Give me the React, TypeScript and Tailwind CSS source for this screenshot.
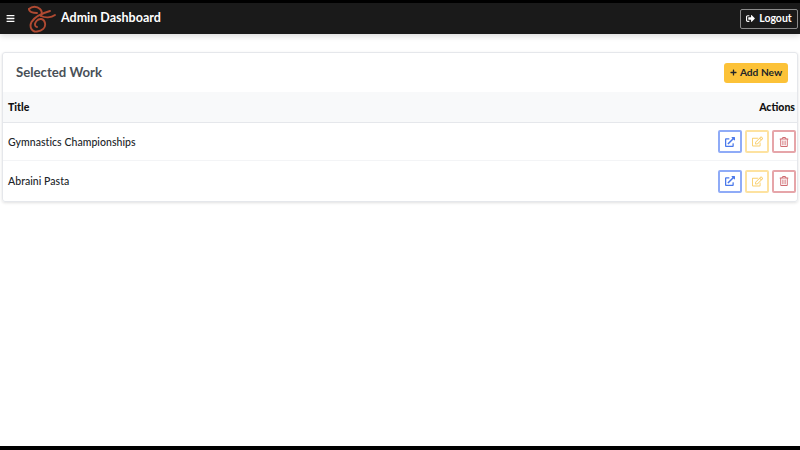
import { FaBars, FaExternalLinkAlt, FaPlus, FaRegEdit, FaRegTrashAlt, FaSignOutAlt } from "react-icons/fa";

const works = ["Gymnastics Championships", "Abraini Pasta"];

function Logo() {
  return (
    <svg viewBox="0 0 30 28" className="h-[28px] w-[30px] shrink-0" fill="none" stroke="#b04a32" strokeWidth="1.9" strokeLinecap="round" strokeLinejoin="round">
      <path d="M23 6 C16 8 8 11 4.5 17 C2 22 5 27.5 10 26.5 C15 26 19 23 18 18 C17 13 12 13 9.5 16 C7 19 8 22 10 22" />
      <path d="M14 11 C18 13 24 13 28 10" />
      <path d="M2 4 C5 1 10 1 13 4 C15 6 15 9 14 11" />
      <path d="M2 4 C2 7 6 8 10 8" />
    </svg>
  );
}

function WorkRow({ title, last }: { title: string; last?: boolean }) {
  return (
    <div className={`flex items-center justify-between pr-[1px] pl-[5px] ${last ? "h-[40px]" : "h-[38px] border-b border-gray-100"}`}>
      <span className="translate-y-px text-[10.5px] font-medium tracking-[0.05px] text-[#212529]">{title}</span>
      <div className="flex gap-[3px]">
        <button className="flex h-[23px] w-[24px] items-center justify-center rounded-[2px] border-2 border-[#8fabf7] text-[#4a78ea]">
          <FaExternalLinkAlt className="h-[10px] w-[10px]" />
        </button>
        <button className="flex h-[23px] w-[24px] items-center justify-center rounded-[2px] border-2 border-[#fde2a0] text-[#f9cf6c]">
          <FaRegEdit className="h-[11px] w-[11px]" />
        </button>
        <button className="flex h-[23px] w-[24px] items-center justify-center rounded-[2px] border-2 border-[#e6a5a9] text-[#cf6a70]">
          <FaRegTrashAlt className="h-[10px] w-[10px]" />
        </button>
      </div>
    </div>
  );
}

export default function App() {
  return (
    <div className="flex h-[450px] w-[800px] flex-col overflow-hidden bg-black pt-[3px] pb-[4px] font-['Lato','Liberation_Sans',sans-serif]">
      <div className="flex-1 bg-white">
        {/* Navbar */}
        <div className="flex h-[31px] items-center justify-between bg-[#1a1a1a] pr-[2px] pl-[6px] shadow-[0_2px_6px_rgba(0,0,0,0.15)]">
          <div className="flex items-center">
            <FaBars className="h-[9px] w-[9px] text-white" />
            <div className="ml-[12px]">
              <Logo />
            </div>
            <span className="ml-[4px] text-[12.5px] font-bold text-white">Admin Dashboard</span>
          </div>
          <button className="flex h-[20px] w-[58px] items-center justify-center gap-[4px] rounded-[2px] border border-[#8b8b8b] text-[10.5px] font-bold text-white">
            <FaSignOutAlt className="h-[9px] w-[9px]" />
            Logout
          </button>
        </div>

        {/* Card */}
        <div className="mx-[2px] mt-[18px] h-[150px] rounded-[3px] border border-gray-200 shadow-[0_1px_3px_rgba(0,0,0,0.12)]">
          <div className="flex h-[39px] items-center justify-between pr-[9px] pl-[13px]">
            <h1 className="text-[13.2px] font-bold text-[#495057]">Selected Work</h1>
            <button className="flex h-[20px] w-[64px] items-center justify-center gap-[3px] rounded-[3px] bg-[#fcc238] text-[10.2px] font-bold text-[#212529]">
              <FaPlus className="h-[7px] w-[7px]" />
              Add New
            </button>
          </div>
          <div className="flex h-[31px] items-center justify-between border-b border-gray-200 bg-[#f8f9fa] pr-[2px] pl-[5px] text-[10.5px] font-black text-[#111]">
            <span className="translate-y-px">Title</span>
            <span className="translate-y-px">Actions</span>
          </div>
          {works.map((w, i) => (
            <WorkRow key={w} title={w} last={i === works.length - 1} />
          ))}
        </div>
      </div>
    </div>
  );
}
